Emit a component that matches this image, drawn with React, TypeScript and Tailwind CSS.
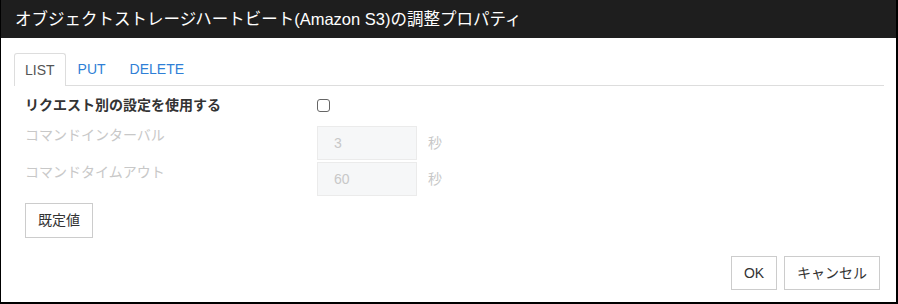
import { useState } from "react";

const font = {
  fontFamily: '"Liberation Sans", "Noto Sans CJK JP", sans-serif',
};

export default function App() {
  const [tab, setTab] = useState("LIST");
  const [perRequest, setPerRequest] = useState(false);

  const tabs = ["LIST", "PUT", "DELETE"];

  return (
    <div
      className="w-[898px] h-[304px] bg-white border-l border-r-2 border-b-2 border-black flex flex-col"
      style={font}
    >
      {/* Title */}
      <div className="h-[38px] bg-[#1e1e1e] text-white text-[16.5px] flex items-center pl-[14px] shrink-0">
        オブジェクトストレージハートビート(Amazon S3)の調整プロパティ
      </div>

      <div className="flex-1 flex flex-col pl-[13px] pr-[12px] pt-[15px]">
        {/* Tabs */}
        <div className="flex h-[33px] border-b border-[#dddddd] text-[14px]">
          {tabs.map((t) =>
            t === tab ? (
              <button
                key={t}
                onClick={() => setTab(t)}
                className="h-[33px] px-[10px] border border-b-0 border-[#dddddd] rounded-t-[3px] bg-white text-[#555555] -mb-px"
              >
                {t}
              </button>
            ) : (
              <button
                key={t}
                onClick={() => setTab(t)}
                className="h-[32px] px-[12px] text-[#2f7fd6]"
              >
                {t}
              </button>
            )
          )}
        </div>

        <div className="pl-[11px] text-[14px]">
          {/* Per-request setting */}
          <div className="mt-[8px] h-[22px] flex items-center">
            <span className="w-[292px] font-bold text-[#333333]">
              リクエスト別の設定を使用する
            </span>
            <input
              type="checkbox"
              checked={perRequest}
              onChange={(e) => setPerRequest(e.target.checked)}
              className="w-[13px] h-[13px] appearance-none border border-[#666666] rounded-[3px] bg-white"
            />
          </div>

          {/* Command interval */}
          <div className="mt-[10px] flex items-start">
            <span className="w-[292px] -mt-[1px] text-[#c8c8c8]">コマンドインターバル</span>
            <input
              disabled
              value="3"
              readOnly
              className="w-[100px] h-[34px] px-[16px] bg-[#f6f7f8] border border-[#ebebeb] text-[#c8c8c8] outline-none"
            />
            <span className="ml-[11px] self-center text-[#c8c8c8]">秒</span>
          </div>

          {/* Command timeout */}
          <div className="mt-[2px] flex items-start">
            <span className="w-[292px] text-[#c8c8c8]">コマンドタイムアウト</span>
            <input
              disabled
              value="60"
              readOnly
              className="w-[100px] h-[34px] px-[16px] bg-[#f6f7f8] border border-[#ebebeb] text-[#c8c8c8] outline-none"
            />
            <span className="ml-[11px] self-center text-[#c8c8c8]">秒</span>
          </div>

          <button className="mt-[7px] w-[68px] h-[35px] border border-[#cccccc] bg-white text-[#333333]">
            既定値
          </button>
        </div>

        {/* Footer */}
        <div className="mt-[18px] flex justify-end gap-[7px] pr-[4px] text-[14px]">
          <button className="w-[46px] h-[34px] border border-[#cccccc] bg-white text-[#333333]">
            OK
          </button>
          <button className="w-[96px] h-[34px] border border-[#cccccc] bg-white text-[#333333]">
            キャンセル
          </button>
        </div>
      </div>
    </div>
  );
}
